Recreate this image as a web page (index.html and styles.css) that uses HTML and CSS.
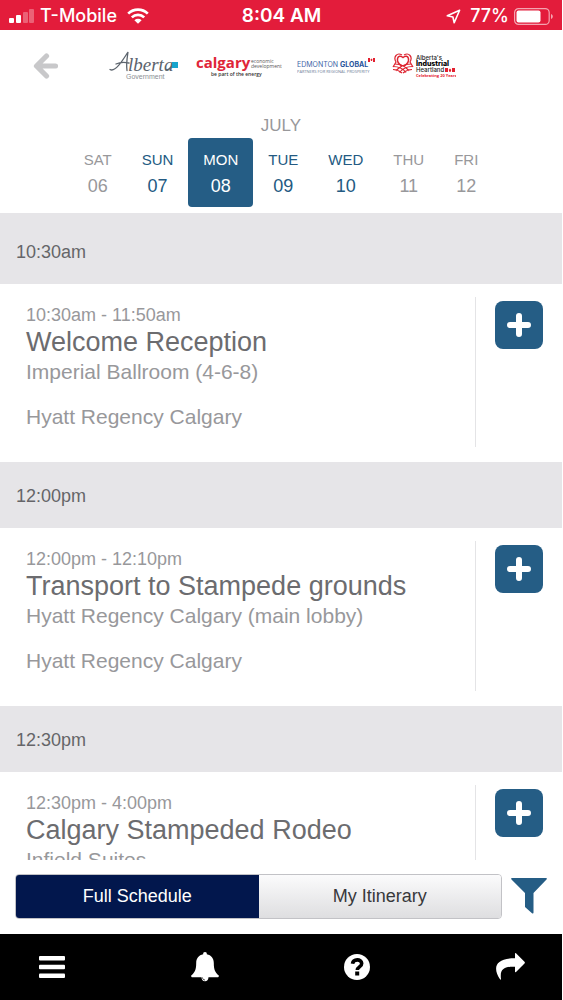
FILE: index.html
```html
<!DOCTYPE html>
<html lang="en">
<head>
<meta charset="utf-8">
<meta name="viewport" content="width=device-width, initial-scale=1">
<title>Schedule</title>
<link rel="stylesheet" href="styles.css">
</head>
<body>
<div class="app">
  <div class="status">
    <div class="status-left">
      <svg class="signal" viewBox="0 0 26 16" aria-hidden="true"><rect x="0" y="10" width="5" height="5" rx="1"/><rect x="7" y="7" width="5" height="8" rx="1"/><g opacity=".3"><rect x="14" y="4" width="5" height="11" rx="1"/><rect x="20" y="1" width="5" height="14" rx="1"/></g></svg>
      <span>T-Mobile</span>
      <svg class="wifi" viewBox="0 0 22 16" aria-hidden="true"><g fill="none" stroke="#fff" stroke-width="2.7"><path d="M1.2 5.6a14 14 0 0 1 19.6 0"/><path d="M4.8 9.4a8.9 8.9 0 0 1 12.4 0"/></g><path d="M11 15.8 7.4 12.2a5.2 5.2 0 0 1 7.2 0z"/></svg>
    </div>
    <span class="clock">8:04 AM</span>
    <div class="status-right">
      <svg class="locate" viewBox="0 0 15 15" aria-hidden="true"><path d="M13.6 1.2 1.3 6.8l5.6 1.2 1.3 5.7z" fill="none" stroke="#fff" stroke-width="1.6" stroke-linejoin="round"/></svg>
      <span>77%</span>
      <svg class="battery" viewBox="0 0 40 17" aria-hidden="true"><rect x=".6" y=".6" width="34.6" height="15.8" rx="4" fill="none" stroke="#fff" stroke-opacity=".6" stroke-width="1.2"/><rect x="2.5" y="2.5" width="24" height="12" rx="2"/><path d="M37 6v5c2.400-1 2.400-4 0-5z" opacity=".6"/></svg>
    </div>
  </div>

  <header class="header">
    <button class="back" aria-label="Back"><svg viewBox="0 0 26 26" aria-hidden="true"><path d="M14.500 3 4.500 13l10 10M5 13h18.500" fill="none" stroke="#c8c8ca" stroke-width="5.200" stroke-linejoin="round" stroke-linecap="round"/></svg></button>
    <div class="logos">
      <svg class="logo-alberta" viewBox="0 0 72 30" role="img" aria-label="Alberta Government">
        <g fill="none" stroke="#5c646d" stroke-width="1.300" stroke-linecap="round"><path d="M1 18.500c5 3 12-8 18-17.500-1 7-2 12-1 18.500M7 13c4-2 9-2 13-1"/><path d="M57 19c3 0 4-2 6-4"/></g>
        <text class="script" x="19" y="20">lberta</text>
        <rect x="63" y="11" width="6" height="6" fill="#17a4cc"/>
        <text class="gov" x="17" y="28">Government</text>
      </svg>
      <svg class="logo-calgary" viewBox="0 0 86 26" role="img" aria-label="Calgary economic development">
        <text class="calgary" x="0" y="15">calgary</text>
        <text class="tiny" x="55" y="10">economic</text>
        <text class="tiny" x="55" y="15">development</text>
        <text class="energy" x="15" y="23">be part of the energy</text>
      </svg>
      <svg class="logo-edmonton" viewBox="0 0 80 20" role="img" aria-label="Edmonton Global">
        <text class="edm" x="0" y="11">EDMONTON</text>
        <text class="edm edm-bold" x="43" y="11">GLOBAL</text>
        <text class="partners" x="0" y="17">PARTNERS FOR REGIONAL PROSPERITY</text>
        <path d="M71 2h2v4h-2zM76 2h2v4h-2zM74.500 2.500l1 1-.5 1.500h-1l-.5-1.500z" fill="#e3202f"/>
      </svg>
      <svg class="logo-heart" viewBox="0 0 64 26" role="img" aria-label="Alberta's Industrial Heartland">
        <path d="M10 13C2 8 6 0 11 4.500c5-4.500 9 3.500 1 8.500" fill="none" stroke="#dd2430" stroke-width="1.500"/>
        <path d="M10 2C5-1 1 4 4 9l-3 5M12 2c5-3 9 2 6 7l3 5" fill="none" stroke="#dd2430" stroke-width="1.200"/>
        <g fill="none" stroke="#dd2430" stroke-width="1.200"><path d="M3 11c6 0 11 3 14 7M1 13.500c6 0 10 2 13 6M19 11c-6 0-12 3-15 7M20.500 13.500c-6 0-10 2-13 6M20 16.500c-4 0-6 1-9 3.500M1 16.500c4 0 6 1 9 3.500"/></g>
        <text class="ht" x="24" y="7">Alberta's</text>
        <text class="ht ht-bold" x="24" y="13">Industrial</text>
        <text class="ht" x="24" y="19">Heartland</text>
        <path d="M53 15h3v4h-3zM60 15h3v4h-3zM58 15.500l1.300 1.500-.8 2h-1l-.8-2z" fill="#e3202f"/>
        <text class="years" x="24" y="24">Celebrating 20 Years</text>
      </svg>
    </div>
  </header>

  <section class="calendar" aria-label="Dates">
    <h1 class="month">JULY</h1>
    <div class="days">
      <button class="day" disabled><span>SAT</span><b>06</b></button>
      <button class="day active"><span>SUN</span><b>07</b></button>
      <button class="day selected" aria-pressed="true"><span>MON</span><b>08</b></button>
      <button class="day active"><span>TUE</span><b>09</b></button>
      <button class="day active"><span>WED</span><b>10</b></button>
      <button class="day" disabled><span>THU</span><b>11</b></button>
      <button class="day" disabled><span>FRI</span><b>12</b></button>
    </div>
  </section>

  <main class="list">
    <h2 class="slot">10:30am</h2>
    <article class="event">
      <div class="info">
        <p class="time">10:30am - 11:50am</p>
        <h3 class="title">Welcome Reception</h3>
        <p class="place">Imperial Ballroom (4-6-8)</p>
        <p class="venue">Hyatt Regency Calgary</p>
      </div>
      <div class="action"><button class="add" aria-label="Add Welcome Reception"><svg viewBox="0 0 24 24" aria-hidden="true"><path d="M12 3v18M3 12h18"/></svg></button></div>
    </article>
    <h2 class="slot">12:00pm</h2>
    <article class="event">
      <div class="info">
        <p class="time">12:00pm - 12:10pm</p>
        <h3 class="title">Transport to Stampede grounds</h3>
        <p class="place">Hyatt Regency Calgary (main lobby)</p>
        <p class="venue">Hyatt Regency Calgary</p>
      </div>
      <div class="action"><button class="add" aria-label="Add Transport to Stampede grounds"><svg viewBox="0 0 24 24" aria-hidden="true"><path d="M12 3v18M3 12h18"/></svg></button></div>
    </article>
    <h2 class="slot">12:30pm</h2>
    <article class="event">
      <div class="info">
        <p class="time">12:30pm - 4:00pm</p>
        <h3 class="title">Calgary Stampeded Rodeo</h3>
        <p class="place">Infield Suites</p>
      </div>
      <div class="action"><button class="add" aria-label="Add Calgary Stampeded Rodeo"><svg viewBox="0 0 24 24" aria-hidden="true"><path d="M12 3v18M3 12h18"/></svg></button></div>
    </article>
  </main>

  <div class="switcher">
    <div class="tabs">
      <button class="tab tab-on" aria-pressed="true">Full Schedule</button>
      <button class="tab" aria-pressed="false">My Itinerary</button>
    </div>
    <button class="filter" aria-label="Filter"><svg viewBox="0 0 36 36" aria-hidden="true"><path d="M1 0h34q1.500 0 .5 1.500L22.500 15v19.500q0 1.500-1.500.8l-7-6.300V15L.5 1.500Q-.5 0 1 0z"/></svg></button>
  </div>

  <nav class="nav">
    <button aria-label="Menu"><svg viewBox="0 0 30 30" aria-hidden="true"><rect x="2" y="4" width="26" height="4.500" rx="1"/><rect x="2" y="12.800" width="26" height="4.500" rx="1"/><rect x="2" y="21.500" width="26" height="4.500" rx="1"/></svg></button>
    <button aria-label="Notifications"><svg viewBox="0 0 30 30" aria-hidden="true"><path d="M15 0c1.300 0 2 .8 1.800 2.300 4.500.9 7 4.200 7 8.700 0 7 1.500 9.500 5 12.500.3 1.200-.4 1.800-1.300 1.800h-9c-.1 2.400-1.500 4-3.500 4s-3.400-1.600-3.500-4h-9c-.9 0-1.600-.6-1.300-1.800 3.500-3 5-5.500 5-12.500 0-4.500 2.500-7.800 7-8.700C13 .8 13.700 0 15 0z"/><path d="M12.500 25.500c.1 1.500 1 2.500 2.500 2.500" fill="none" stroke="#000" stroke-width=".7"/></svg></button>
    <button aria-label="Help"><svg viewBox="0 0 30 30" aria-hidden="true"><circle cx="15" cy="15" r="13"/><path d="M10.500 11.700c.8-5 8.900-5 9.200-.4.200 3.600-4.400 3.400-4.400 6.700" fill="none" stroke="#000" stroke-width="3.600"/><rect x="13.200" y="19.500" width="4" height="4" fill="#000"/></svg></button>
    <button aria-label="Share"><svg viewBox="0 0 30 30" aria-hidden="true"><path d="M20 1.500q0-1 1-.3l8.500 8.600q.8.800 0 1.600L21 20q-1 .7-1-.5v-4.700c-10-.4-15.500 1.800-14 12.200q0 1.300-1 .3C-3 15 1 6.200 20 6.200z"/></svg></button>
  </nav>
</div>
</body>
</html>
```
FILE: styles.css
```css
* { box-sizing: border-box; }
body { margin: 0; background: #fff; font-family: "Liberation Sans", Arial, sans-serif; color: #98989b; }
h1, h2, h3, p { margin: 0; font-weight: 400; }
button { margin: 0; padding: 0; border: 0; background: none; font: inherit; color: inherit; }
svg { display: block; }

.app { display: flex; flex-direction: column; height: 100vh; padding-right: 1px; }

.status { display: grid; grid-template-columns: 1fr auto 1fr; align-items: center; flex: none; height: 30px; padding: 2px 8px 0 9px; background: #e31c3b; color: #fff; fill: #fff; font: 600 18px/24px Inter, sans-serif; }
.status-left, .status-right { display: flex; align-items: center; gap: 5px; font-weight: 500; }
.status-right { justify-content: flex-end; }
.clock { font-size: 19px; }
.signal { width: 26px; height: 16px; }
.wifi { width: 22px; height: 16px; margin-left: 5px; }
.locate { width: 15px; height: 15px; margin-right: 4px; }
.battery { width: 40px; height: 17px; }

.header { display: flex; align-items: center; flex: none; height: 72px; padding-left: 32px; }
.back svg { width: 26px; height: 26px; }
.logos { display: flex; align-items: center; flex: 1; gap: 15px; padding-left: 51px; }
.logo-alberta { width: 72px; height: 30px; }
.logo-calgary { width: 86px; height: 26px; }
.logo-edmonton { width: 80px; height: 20px; }
.logo-heart { width: 64px; height: 26px; }
.script { font: italic 19px "Liberation Serif", serif; fill: #5c646d; }
.gov { font-size: 7px; fill: #8b8f94; }
.calgary { font: 700 15px "Open Sans", sans-serif; fill: #e02538; }
.tiny { font: 5px "Open Sans", sans-serif; fill: #555; }
.energy { font: 600 5px "Open Sans", sans-serif; fill: #333; }
.edm { font: 7px Inter, sans-serif; fill: #3f67a8; }
.edm-bold { font-weight: 700; font-size: 7px; fill: #27539b; }
.partners { font: 4px "Open Sans", sans-serif; fill: #6c7c96; }
.ht { font: 500 6px Inter, sans-serif; fill: #222; }
.ht-bold { font-weight: 800; font-size: 7px; fill: #000; }
.years { font: 700 4px "Open Sans", sans-serif; fill: #e3202f; }

.calendar { flex: none; padding: 12px 0 6px; text-align: center; }
.month { font-size: 17px; line-height: 24px; }
.days { display: flex; justify-content: center; }
.day { display: flex; flex-direction: column; align-items: center; gap: 2px; height: 69px; padding: 10px 15px; border-radius: 4px; font-size: 15px; line-height: 24px; color: #98989b; }
.day b { font-size: 18px; font-weight: 400; }
.active { color: #235a82; }
.selected { background: #255d85; color: #fff; }

.list { flex: 1; min-height: 0; overflow: hidden; border-top: 5px solid #e6e5e8; }
.slot { height: 66px; padding: 0 16px; background: #e6e5e8; color: #656568; font-size: 18px; line-height: 68px; }
.event { display: flex; height: 178px; padding: 13px 19px 15px 26px; }
.info { flex: 1; padding-top: 6px; }
.time { font-size: 18px; line-height: 24px; }
.title { color: #6c6c6f; font-size: 27px; line-height: 30px; }
.place, .venue { font-size: 21px; line-height: 30px; }
.venue { margin-top: 15px; }
.action { padding: 4px 0 0 19px; border-left: 1px solid #e4e4e6; }
.add { display: grid; place-items: center; width: 48px; height: 48px; border-radius: 8px; background: #255d85; }
.add svg { width: 24px; height: 24px; fill: none; stroke: #fff; stroke-width: 6; stroke-linecap: round; }

.switcher { display: flex; align-items: center; flex: none; gap: 9px; height: 74px; padding: 0 15px 2px; }
.tabs { display: flex; flex: 1; height: 45px; border: 1px solid #c2c2c6; border-radius: 4px; overflow: hidden; }
.tab { flex: 1; background: linear-gradient(#fbfbfc, #dedee0); color: #38383b; font-size: 18px; }
.tab-on { background: #02174d; color: #fff; }
.filter svg { width: 36px; height: 36px; fill: #255d85; }

.nav { display: flex; justify-content: space-between; align-items: center; flex: none; height: 66px; padding: 0 37px; background: #000; }
.nav svg { width: 30px; height: 30px; fill: #fff; }
```
